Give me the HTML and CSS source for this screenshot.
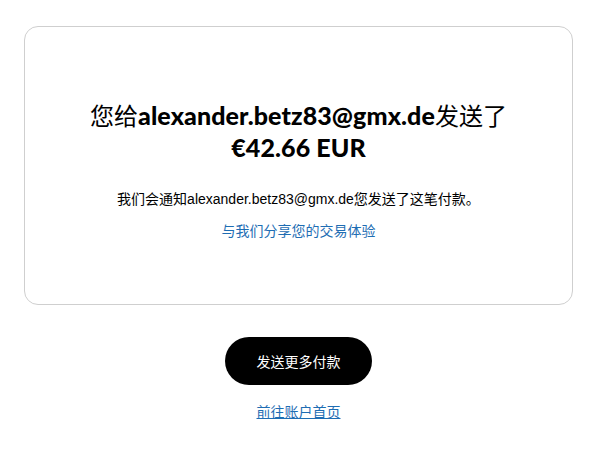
FILE: index.html
```html
<!DOCTYPE html>
<html lang="zh-CN">
<head>
<meta charset="UTF-8" />
<meta name="viewport" content="width=device-width, initial-scale=1" />
<title>付款已发送</title>
<link rel="stylesheet" href="styles.css">
</head>
<body>
<div class="page">
    <div class="card">
        <h1>您给<b>alexander.betz83@gmx.de</b>发送了<br><b>€42.66 EUR</b></h1>
        <p class="note">我们会通知alexander.betz83@gmx.de您发送了这笔付款。</p>
        <a class="share" href="#">与我们分享您的交易体验</a>
    </div>
    <div class="actions">
        <button type="button">发送更多付款</button>
        <a class="home" href="#">前往账户首页</a>
    </div>
</div>
</body>
</html>
```

FILE: styles.css
```css
body { margin: 0; background: #fff; font-family: "Liberation Sans", Arial, "Noto Sans CJK SC", sans-serif; color: #000; }
.page { padding: 26px 22px 0 24px; }
.card { border: 1px solid #cfcfcf; border-radius: 14px; height: 279px; box-sizing: border-box; padding-top: 72px; text-align: center; }
h1 { margin: 0; font-size: 24px; line-height: 32px; font-weight: 400; font-family: "Noto Sans CJK SC", sans-serif; }
h1 b { font-family: "Lato", "Noto Sans CJK SC", sans-serif; font-size: 25px; font-weight: 900; letter-spacing: 0.1px; }
.note { margin: 26px 0 0; font-size: 14px; line-height: 20px; }
.share { display: inline-block; margin-top: 12px; font-size: 14px; line-height: 20px; color: #1e6db3; text-decoration: none; }
.actions { display: flex; flex-direction: column; align-items: center; padding-top: 32px; }
button { width: 147px; height: 48px; border: none; border-radius: 24px; background: #000; color: #fff; font-size: 14px; font-family: inherit; cursor: pointer; }
.home { margin-top: 17px; font-size: 14px; line-height: 20px; color: #1e6db3; }
```
